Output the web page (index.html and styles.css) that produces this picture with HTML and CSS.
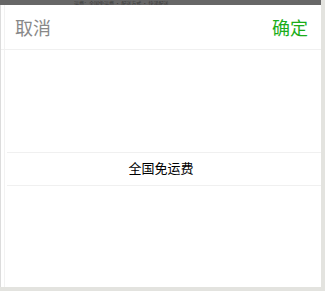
FILE: index.html
```html
<!DOCTYPE html>
<html lang="zh-CN">
<head>
    <meta charset="UTF-8">
    <meta name="viewport" content="width=device-width, initial-scale=1.0">
    <title>选择运费</title>
    <link rel="stylesheet" href="styles.css">
</head>
<body>
    <div class="frame">
        <!-- dimmed page behind the picker -->
        <div class="backdrop">
            <span class="backdrop-text">运费：全国免运费 · 配送方式 · 快递配送</span>
        </div>

        <div class="sheet">
            <div class="toolbar">
                <span class="btn cancel">取消</span>
                <span class="btn confirm">确定</span>
            </div>

            <div class="picker">
                <div class="indicator"></div>
                <div class="column">
                    <div class="item selected">全国免运费</div>
                </div>
            </div>
        </div>
    </div>
</body>
</html>
```

FILE: styles.css
```css
body, html {
    margin: 0;
    padding: 0;
    height: 100%;
    overflow: hidden;
    background-color: #e3e3df;
    font-family: "Noto Sans CJK SC", "Liberation Sans", sans-serif;
}
.frame {
    width: 321px;
    height: 287px;
    display: flex;
    flex-direction: column;
    background-color: #fff;
}
.backdrop {
    height: 5px;
    background-color: #676767;
    overflow: hidden;
    padding-left: 74px;
}
.backdrop-text {
    display: block;
    font-size: 5px;
    line-height: 5px;
    color: #3c3c3c;
    white-space: nowrap;
}
.sheet {
    flex: 1;
    display: flex;
    flex-direction: column;
    border-left: 1px solid #dcdcdc;
    box-shadow: inset 3px 0 0 #fff, inset 4px 0 0 #f2f2f2;
}
.toolbar {
    height: 44px;
    display: flex;
    justify-content: space-between;
    align-items: center;
    padding: 0 13px 0 14px;
    border-bottom: 1px solid #f0f0f0;
}
.btn {
    font-size: 18px;
    line-height: 20px;
}
.cancel {
    color: #888;
}
.confirm {
    color: #1aad19;
}
.picker {
    flex: 1;
    position: relative;
    display: flex;
    align-items: center;
    justify-content: center;
}
.indicator {
    position: absolute;
    left: 6px;
    right: 0;
    top: 50%;
    height: 32px;
    margin-top: -17px;
    border-top: 1px solid #f0f0f0;
    border-bottom: 1px solid #f0f0f0;
}
.column {
    width: 100%;
    text-align: center;
    margin-top: -1px;
}
.item {
    height: 34px;
    line-height: 34px;
    font-size: 13px;
    color: #000;
}
```
